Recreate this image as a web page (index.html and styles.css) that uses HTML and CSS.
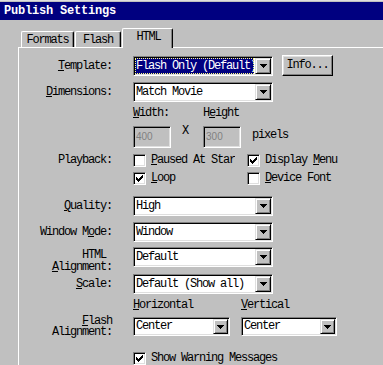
FILE: index.html
```html
<!DOCTYPE html>
<html lang="en">
<head>
  <meta charset="UTF-8" />
  <title>Publish Settings</title>
  <link rel="stylesheet" href="styles.css">
</head>
<body>
  <div class="window">
    <!-- Title bar -->
    <div class="titlebar">Publish Settings</div>

    <!-- Tabs -->
    <div class="tabs">
      <div class="tab tab-formats">Formats</div>
      <div class="tab tab-flash">Flash</div>
      <div class="tab tab-html active">HTML</div>
    </div>

    <!-- Tab page -->
    <div class="panel">
      <div class="row row-template">
        <div class="label"><u>T</u>emplate:</div>
        <div class="cell">
          <div class="select sel-wide focus">
            <span class="value">Flash Only (Default)</span>
            <span class="drop"><svg width="7" height="4" viewBox="0 0 7 4"><path d="M0 0h7v1H0zM1 1h5v1H1zM2 2h3v1H2zM3 3h1v1H3z"/></svg></span>
          </div>
          <div class="button">Info...</div>
        </div>
      </div>

      <div class="row row-dims">
        <div class="label"><u>D</u>imensions:</div>
        <div class="cell">
          <div class="select sel-wide">
            <span class="value">Match Movie</span>
            <span class="drop"><svg width="7" height="4" viewBox="0 0 7 4"><path d="M0 0h7v1H0zM1 1h5v1H1zM2 2h3v1H2zM3 3h1v1H3z"/></svg></span>
          </div>
        </div>
      </div>

      <div class="row row-size">
        <div class="label"></div>
        <div class="cell">
          <div class="field">
            <div class="field-label"><u>W</u>idth:</div>
            <div class="edit">400</div>
          </div>
          <div class="x">X</div>
          <div class="field">
            <div class="field-label">H<u>e</u>ight</div>
            <div class="edit">300</div>
          </div>
          <div class="pixels">pixels</div>
        </div>
      </div>

      <div class="row row-playback">
        <div class="label">Playback:</div>
        <div class="checks">
          <div class="checkline">
            <span class="check"></span>
            <span class="check-text clip"><u>P</u>aused At Start</span>
          </div>
          <div class="checkline">
            <span class="check"><svg width="9" height="9" viewBox="0 0 9 9"><path d="M7 1h1v1H7zM6 2h2v1H6zM1 3h1v1H1zM5 3h3v1H5zM1 4h2v1H1zM4 4h3v1H4zM1 5h5v1H1zM2 6h3v1H2zM3 7h1v1H3z"/></svg></span>
            <span class="check-text">Display <u>M</u>enu</span>
          </div>
          <div class="checkline">
            <span class="check"><svg width="9" height="9" viewBox="0 0 9 9"><path d="M7 1h1v1H7zM6 2h2v1H6zM1 3h1v1H1zM5 3h3v1H5zM1 4h2v1H1zM4 4h3v1H4zM1 5h5v1H1zM2 6h3v1H2zM3 7h1v1H3z"/></svg></span>
            <span class="check-text"><u>L</u>oop</span>
          </div>
          <div class="checkline">
            <span class="check"></span>
            <span class="check-text"><u>D</u>evice Font</span>
          </div>
        </div>
      </div>

      <div class="row row-quality">
        <div class="label"><u>Q</u>uality:</div>
        <div class="cell">
          <div class="select sel-wide">
            <span class="value">High</span>
            <span class="drop"><svg width="7" height="4" viewBox="0 0 7 4"><path d="M0 0h7v1H0zM1 1h5v1H1zM2 2h3v1H2zM3 3h1v1H3z"/></svg></span>
          </div>
        </div>
      </div>

      <div class="row row-window">
        <div class="label">Window M<u>o</u>de:</div>
        <div class="cell">
          <div class="select sel-wide">
            <span class="value">Window</span>
            <span class="drop"><svg width="7" height="4" viewBox="0 0 7 4"><path d="M0 0h7v1H0zM1 1h5v1H1zM2 2h3v1H2zM3 3h1v1H3z"/></svg></span>
          </div>
        </div>
      </div>

      <div class="row row-html">
        <div class="label label-two">
          <div class="line">HTML&nbsp;</div>
          <div class="line"><u>A</u>lignment:</div>
        </div>
        <div class="cell">
          <div class="select sel-wide">
            <span class="value">Default</span>
            <span class="drop"><svg width="7" height="4" viewBox="0 0 7 4"><path d="M0 0h7v1H0zM1 1h5v1H1zM2 2h3v1H2zM3 3h1v1H3z"/></svg></span>
          </div>
        </div>
      </div>

      <div class="row row-scale">
        <div class="label"><u>S</u>cale:</div>
        <div class="cell">
          <div class="select sel-wide">
            <span class="value">Default (Show all)</span>
            <span class="drop"><svg width="7" height="4" viewBox="0 0 7 4"><path d="M0 0h7v1H0zM1 1h5v1H1zM2 2h3v1H2zM3 3h1v1H3z"/></svg></span>
          </div>
        </div>
      </div>

      <div class="row row-hv">
        <div class="label"></div>
        <div class="cell">
          <div class="col-h"><u>H</u>orizontal</div>
          <div class="col-v"><u>V</u>ertical</div>
        </div>
      </div>

      <div class="row row-flash">
        <div class="label label-flash">
          <div class="line"><u>F</u>lash</div>
          <div class="line">Alignment:</div>
        </div>
        <div class="cell">
          <div class="select sel-h">
            <span class="value">Center</span>
            <span class="drop"><svg width="7" height="4" viewBox="0 0 7 4"><path d="M0 0h7v1H0zM1 1h5v1H1zM2 2h3v1H2zM3 3h1v1H3z"/></svg></span>
          </div>
          <div class="select sel-v">
            <span class="value">Center</span>
            <span class="drop"><svg width="7" height="4" viewBox="0 0 7 4"><path d="M0 0h7v1H0zM1 1h5v1H1zM2 2h3v1H2zM3 3h1v1H3z"/></svg></span>
          </div>
        </div>
      </div>

      <div class="row row-warn">
        <div class="label"></div>
        <div class="checkline">
          <span class="check"><svg width="9" height="9" viewBox="0 0 9 9"><path d="M7 1h1v1H7zM6 2h2v1H6zM1 3h1v1H1zM5 3h3v1H5zM1 4h2v1H1zM4 4h3v1H4zM1 5h5v1H1zM2 6h3v1H2zM3 7h1v1H3z"/></svg></span>
          <span class="check-text">Show Warning Messages</span>
        </div>
      </div>
    </div>
  </div>
</body>
</html>
```

FILE: styles.css
```css
* { box-sizing: border-box; margin: 0; padding: 0; }

body {
  width: 383px;
  height: 365px;
  overflow: hidden;
  background: #c0c0c0;
  font-family: "Liberation Mono", monospace;
  font-size: 12px;
  letter-spacing: -1.2px;
  color: #000;
}

svg { display: block; shape-rendering: crispEdges; }

u { text-decoration: underline; text-underline-offset: 1px; }

.window {
  height: 365px;
  display: flex;
  flex-direction: column;
  border-top: 1px solid #dfdfdf;
  padding-top: 1px;
}

/* Title bar */

.titlebar {
  height: 18px;
  line-height: 18px;
  background: #000080;
  color: #fff;
  font-weight: bold;
  letter-spacing: -0.2px;
  padding-left: 4px;
}

/* Tabs */

.tabs {
  display: flex;
  align-items: flex-end;
  height: 19px;
  margin-top: 8px;
  padding-left: 21px;
}

.tab {
  height: 16px;
  line-height: 16px;
  text-align: center;
  background: #c0c0c0;
  border-top: 1px solid #fff;
  border-left: 1px solid #fff;
  border-right: 1px solid #000;
  box-shadow: inset -1px 0 #808080;
  border-radius: 2px 2px 0 0;
  margin-right: 1px;
}

.tab-formats { width: 53px; }
.tab-flash { width: 46px; }

.tab-html {
  width: 51px;
  height: 20px;
  margin-bottom: -1px;
  position: relative;
  z-index: 1;
  padding-left: 2px;
}

/* Page */

.panel {
  flex: 1;
  margin-left: 18px;
  border-top: 1px solid #fff;
  border-left: 1px solid #fff;
  display: flex;
  flex-direction: column;
}

.row {
  display: grid;
  grid-template-columns: 93px 1fr;
  column-gap: 21px;
  align-items: center;
}

.label {
  text-align: right;
  white-space: nowrap;
  line-height: 12px;
}

.cell {
  display: flex;
  align-items: center;
}

.row-template { margin-top: 7px; }
.row-dims { margin-top: 6px; }
.row-size { margin-top: 5px; }
.row-playback { margin-top: 6px; align-items: start; }
.row-playback .label { line-height: 13px; }
.row-quality { margin-top: 11px; }
.row-window { margin-top: 6px; }
.row-html { margin-top: 5px; }
.row-scale { margin-top: 7px; }
.row-hv { margin-top: 5px; line-height: 12px; }
.row-flash { margin-top: 6px; }
.row-warn { margin-top: 16px; }

.line { height: 12px; }

.label-two {
  align-self: start;
  margin-top: 2px;
  margin-bottom: -6px;
}

.label-flash {
  align-self: start;
  line-height: 11px;
  margin-top: -1px;
  margin-bottom: -2px;
}

.label-flash .line { height: 11px; }

/* Combo boxes */

.select {
  display: flex;
  height: 20px;
  padding: 1px;
  background: #fff;
  border: 1px solid;
  border-color: #808080 #fff #fff #808080;
  box-shadow: inset 1px 1px #000, inset -1px -1px #dfdfdf;
}

.sel-wide { width: 140px; }
.sel-h { width: 97px; height: 19px; }
.sel-v { width: 96px; height: 19px; margin-left: 11px; }

.value {
  flex: 1;
  overflow: hidden;
  white-space: nowrap;
  padding-left: 1px;
  line-height: 16px;
}

.sel-h .value, .sel-v .value { line-height: 15px; }

.focus .value {
  background: #000080;
  color: #fff;
  outline: 1px dotted #ffff80;
  outline-offset: -1px;
  margin-right: 1px;
}

.drop {
  width: 16px;
  display: flex;
  align-items: center;
  justify-content: center;
  background: #c0c0c0;
  border: 1px solid;
  border-color: #dfdfdf #000 #000 #dfdfdf;
  box-shadow: inset 1px 1px #fff, inset -1px -1px #808080;
}

.sel-h .drop, .sel-v .drop { width: 15px; }

.button {
  width: 51px;
  height: 21px;
  margin-left: 9px;
  line-height: 19px;
  text-align: center;
  background: #c0c0c0;
  border: 1px solid;
  border-color: #fff #000 #000 #fff;
  box-shadow: inset -1px -1px #808080, inset 1px 1px #dfdfdf;
}

/* Width / height */

.row-size .cell { align-items: flex-end; }

.field { display: flex; flex-direction: column; }

.field-label {
  line-height: 12px;
  margin-bottom: 7px;
}

.edit {
  width: 38px;
  height: 22px;
  padding-left: 2px;
  line-height: 20px;
  font-family: "Liberation Sans", sans-serif;
  font-size: 10px;
  letter-spacing: 0;
  color: #808080;
  background: #c0c0c0;
  border: 1px solid;
  border-color: #808080 #fff #fff #808080;
  box-shadow: inset 1px 1px #000, inset -1px -1px #dfdfdf;
}

.x {
  line-height: 12px;
  margin: 0 15px 11px 11px;
}

.pixels {
  line-height: 12px;
  margin: 0 0 7px 11px;
}

/* Check boxes */

.checks {
  display: grid;
  grid-template-columns: 114px auto;
  row-gap: 5px;
}

.checkline {
  display: flex;
  align-items: center;
  height: 13px;
  white-space: nowrap;
}

.check {
  width: 13px;
  height: 13px;
  flex: none;
  padding: 1px;
  background: #fff;
  border: 1px solid;
  border-color: #808080 #fff #fff #808080;
  box-shadow: inset 1px 1px #000, inset -1px -1px #dfdfdf;
}

.check-text {
  margin-left: 5px;
  line-height: 13px;
}

.clip {
  width: 84px;
  overflow: hidden;
}

/* Alignment headings */

.col-h { width: 108px; }
```
